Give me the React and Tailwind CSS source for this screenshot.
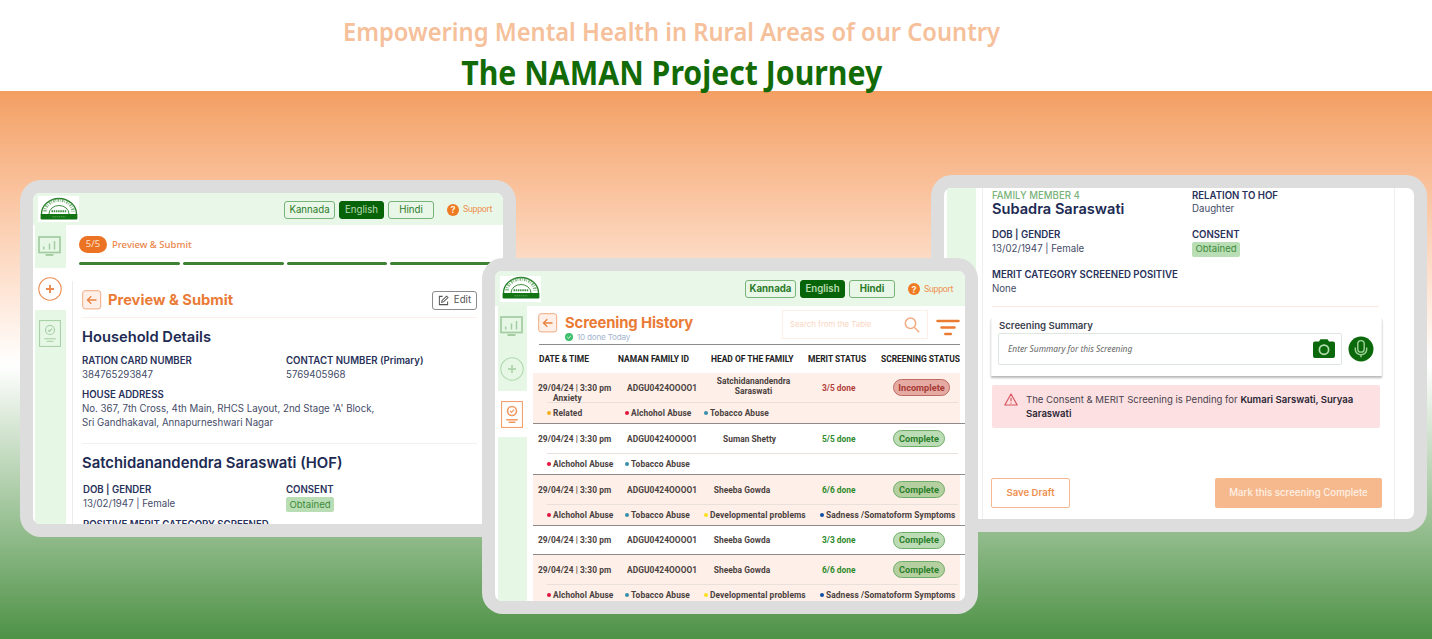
import React from "react";

const cx = (...c) => c.filter(Boolean).join(" ");

function Logo() {
  return (
    <svg viewBox="0 0 38 23" className="h-[23px] w-[38px]">
      <path d="M1.5 17a17.5 15.5 0 0 1 35 0" fill="#fff" stroke="#27802a" strokeWidth="1.3" />
      <path d="M9 17a10 8.5 0 0 1 20 0" fill="none" stroke="#3f8f40" strokeWidth="1" />
      <path d="M5 14.5a14 11.5 0 0 1 28 0" fill="none" stroke="#4d9a4e" strokeWidth="3.6" strokeDasharray="1.6 .9 .8 1.3" opacity=".7" />
      <path d="M11.5 14.3h15" stroke="#3f8f40" strokeWidth="2" strokeDasharray="1.5 .7" />
      <path d="M.6 17h36.8v4.2q0 1.2-1.2 1.2H1.8q-1.2 0-1.2-1.2z" fill="#137413" />
      <path d="M12.5 19.8h13" stroke="#5aa35a" strokeWidth="1" strokeDasharray="1.5 .6" />
    </svg>
  );
}

function Monitor() {
  return (
    <svg viewBox="0 0 23 21" className="h-[21px] w-[23px]" fill="none" stroke="#a3cca2">
      <rect x="1" y="1" width="21" height="15.5" strokeWidth="1.7" />
      <path d="M5.7 13.5v-3M11.5 13.5V7.5M16.5 13.5V5" strokeWidth="1.5" />
      <path d="M7.5 19h8" strokeWidth="1.8" />
    </svg>
  );
}

function Plus({ active }) {
  return (
    <svg viewBox="0 0 24 24" className="size-6" fill="none" stroke={active ? "#ec8b50" : "#b2d8b1"}>
      <circle cx="12" cy="12" r="11.2" strokeWidth="1.1" />
      <path d="M12 8v8M8 12h8" strokeWidth="1.9" />
    </svg>
  );
}

function Doc({ active }) {
  return (
    <svg viewBox="0 0 22 27" className="h-[27px] w-[22px]" fill="none" stroke={active ? "#f2995f" : "#a3cda2"}>
      <rect x=".6" y=".6" width="20.8" height="25.8" strokeWidth="1" />
      <circle cx="11" cy="10" r="4.5" strokeWidth={active ? 1.6 : 1.1} />
      <path d="M9 10l1.5 1.5 2.6-2.8" strokeWidth="1.2" />
      <path d="M5.2 18.8h11.6M7.5 21.3h7" strokeWidth={active ? 1.5 : 1} />
    </svg>
  );
}

function Back() {
  return (
    <svg viewBox="0 0 20 20" className="size-5 shrink-0" fill="none">
      <rect x=".7" y=".7" width="18" height="18.2" rx="2.5" fill="#fef0e8" stroke="#f0a981" strokeWidth="1" />
      <path d="M14.5 10H5.5M9.3 6.2 5.4 10l3.9 3.8" stroke="#ea8242" strokeWidth="1.3" />
    </svg>
  );
}

function Device({ className, children }) {
  return (
    <section className={cx("absolute h-[357px] w-[496px] rounded-[21px] bg-[#dcdddc] p-[13px]", className)}>
      <div className="flex h-full w-full flex-col overflow-hidden rounded-[7px] bg-white">{children}</div>
    </section>
  );
}

function Languages({ bold }) {
  const base = "flex h-[18px] items-center justify-center rounded-[3px] border text-[9.7px] leading-none";
  const weight = bold ? "font-bold" : "font-normal";
  return (
    <div className="flex items-center pt-px">
      <div className="flex gap-[4px]">
        <span className={cx(base, weight, "w-[51px] border-[#78b377] text-[#2b7b29]")}>Kannada</span>
        <span className={cx(base, bold ? "font-semibold" : "", "w-[45px] border-[#076307] bg-[#076307] text-[#b7dcb2]")}>English</span>
        <span className={cx(base, weight, "w-[46px] border-[#78b377] text-[#2b7b29]")}>Hindi</span>
      </div>
      <span className="ml-[13px] flex size-3 items-center justify-center rounded-full bg-[#ef7a24] text-[9px] leading-none font-bold text-[#fff0df]">?</span>
      <span className="ml-[4px] w-[29px] font-[Roboto] text-[8.8px] leading-none tracking-[-0.28px] text-[#ee9050]">Support</span>
    </div>
  );
}

const Label = ({ children, className }) => (
  <div className={cx("text-[9.65px] leading-[14px] font-semibold whitespace-nowrap text-[#28315a]", className)}>{children}</div>
);
const Value = ({ children, className }) => (
  <div className={cx("text-[9.7px] leading-[14px] whitespace-nowrap text-[#454c68]", className)}>{children}</div>
);
const Obtained = () => (
  <span className="flex h-[15px] w-[48px] items-center justify-center rounded-[2px] bg-[#b9ddb4] text-[9.6px] leading-none text-[#3d8b3b]">
    Obtained
  </span>
);

function PreviewDevice() {
  return (
    <Device className="top-[180px] left-[20px]">
      <header className="flex h-[32px] shrink-0 items-center justify-between bg-[#e9f7e8] pr-[11px] pl-[5px]">
        <div className="flex h-[26px] w-[41px] items-center justify-center bg-white pb-[2px]">
          <Logo />
        </div>
        <Languages />
      </header>
      <div className="flex min-h-0 flex-1">
        <nav className="ml-[2px] flex w-[31px] shrink-0 flex-col items-center bg-[#e6f8e5] pt-[11px] pr-[2px]">
          <Monitor />
          <div className="mt-[11px] -mr-[2px] flex h-[42px] w-[31px] items-center justify-center self-start bg-white pr-[2px]">
            <Plus active />
          </div>
          <div className="mt-[10px]">
            <Doc />
          </div>
        </nav>
        <main className="flex min-w-0 flex-1 flex-col pl-[6px]">
          <div className="mt-[11px] flex h-[17px] shrink-0 items-center pl-[7px]">
            <span className="flex h-[17px] w-[28px] items-center justify-center rounded-full bg-[#ec7324] font-['Noto_Sans'] text-[9.5px] text-[#fde3cf]">5/5</span>
            <span className="ml-[5px] pt-px font-['Noto_Sans'] text-[9.5px] font-medium text-[#e98549]">Preview &amp; Submit</span>
          </div>
          <div className="mt-[9px] ml-[7px] flex w-[412px] shrink-0 gap-[3px]">
            {[0, 1, 2, 3].map((i) => (
              <i key={i} className="h-[3px] flex-1 rounded-full bg-[#3d8134]" />
            ))}
          </div>
          <div className="mt-[16px] flex flex-1 flex-col border-l border-[#ececec] pr-[26px] pl-[9px]">
            <div className="flex h-[37px] shrink-0 items-center border-b border-[#fdf0ea] pt-[2px]">
              <Back />
              <h2 className="ml-[6px] pt-px text-[14.7px] font-bold text-[#ea7b36]">Preview &amp; Submit</h2>
              <span className="ml-auto flex h-[19px] w-[45px] items-center justify-center gap-[5px] rounded-[3px] border border-[#8b8b8b] text-[9.7px] text-[#555]">
                <svg viewBox="0 0 12 12" className="size-[11px]" fill="none" stroke="#555" strokeWidth="1.1">
                  <path d="M5 1.500H1.500v9h9V7" />
                  <path d="M4 8l.5-2L9.300 1.200l1.600 1.600L6 7.500z" />
                </svg>
                Edit
              </span>
            </div>
            <h3 className="mt-[9px] text-[14.7px] leading-[20px] font-semibold text-[#202a52]">Household Details</h3>
            <div className="mt-[7px] grid grid-cols-[204px_1fr]">
              <Label>RATION CARD NUMBER</Label>
              <Label>CONTACT NUMBER (Primary)</Label>
              <Value>384765293847</Value>
              <Value>5769405968</Value>
            </div>
            <Label className="mt-[6px]">HOUSE ADDRESS</Label>
            <Value>No. 367, 7th Cross, 4th Main, RHCS Layout, 2nd Stage &#39;A&#39; Block,</Value>
            <Value>Sri Gandhakaval, Annapurneshwari Nagar</Value>
            <div className="mt-[13px] h-px bg-[#f3f0ef]" />
            <h3 className="mt-[9px] text-[14.85px] leading-[20px] font-semibold whitespace-nowrap text-[#202a52]">Satchidanandendra Saraswati (HOF)</h3>
            <div className="mt-[10px] grid grid-cols-[203px_1fr] pl-[1px]">
              <Label>DOB | GENDER</Label>
              <Label>CONSENT</Label>
              <Value>13/02/1947 | Female</Value>
              <Obtained />
            </div>
            <Label className="mt-[6px] pl-[1px]">POSITIVE MERIT CATEGORY SCREENED</Label>
          </div>
        </main>
      </div>
    </Device>
  );
}

const ALC = ["#e2143c", "Alchohol Abuse"];
const TOB = ["#3a8fa8", "Tobacco Abuse"];
const DEV = ["#fbe01e", "Developmental problems"];
const SAD = ["#0e4fa6", "Sadness /Somatoform Symptoms"];
const ROWS = [
  { name: "Satchidanandendra Saraswati", pad: "pl-[1px] pr-[9px] -mt-[3px]", merit: "3/5 done", bad: true, tinted: true, note: "Anxiety", tags: [["#f2b01e", "Related"], ALC, TOB] },
  { name: "Suman Shetty", pad: "pr-[16px]", merit: "5/5 done", tags: [ALC, TOB] },
  { name: "Sheeba Gowda", pad: "pr-[31px]", merit: "6/6 done", tinted: true, tags: [ALC, TOB, DEV, SAD] },
  { name: "Sheeba Gowda", pad: "pr-[31px]", merit: "3/3 done", tags: [] },
  { name: "Sheeba Gowda", pad: "pr-[31px]", merit: "6/6 done", tinted: true, tags: [ALC, TOB, DEV, SAD] },
];

function Row({ row }) {
  const status = row.bad
    ? "w-[57px] border-[#bd6b64] bg-[#e5aaa2] text-[#a63a35]"
    : cx("w-[52px] border-[#6fae69] text-[#2b7f2b]", row.tinted ? "bg-[#b5cfa0]" : "bg-[#bcdcb5]");
  const hasTags = row.tags.length > 0;
  return (
    <div className="shrink-0 border-b border-[#8d8a89]">
      <div className={cx("mr-[5px]", row.tinted && "bg-[#fef0e9]")}>
        <div className={cx("grid grid-cols-[87px_83px_99px_76px_1fr] items-center pl-[5px]", hasTags ? "h-[29px]" : "h-[28px]")}>
          <div className="relative tracking-[0.06px] whitespace-nowrap">
            29/04/24 | 3:30 pm
            {row.note && <span className="absolute top-[10px] left-[15px]">{row.note}</span>}
          </div>
          <div className="pl-[2px] tracking-[0.06px]">ADGU0424OOOO1</div>
          <div className={cx("text-center leading-[10px] tracking-[0.04px]", row.pad)}>{row.name}</div>
          <div className={cx("pl-[15px]", row.bad ? "text-[#b3413c]" : "text-[#2f8a2d]")}>{row.merit}</div>
          <div className="pl-[10px]">
            <span className={cx("flex h-[17px] items-center justify-center rounded-full border text-[9.2px] font-bold", status)}>
              {row.bad ? "Incomplete" : "Complete"}
            </span>
          </div>
        </div>
        {hasTags && (
          <div className="mr-[2px] ml-[14px] grid h-[21px] grid-cols-[78px_79px_116px_1fr] items-center border-t border-[#e9dfdb] pb-px">
            {row.tags.map(([color, text]) => (
              <div key={text} className="flex items-center gap-[2px] tracking-[0.09px] whitespace-nowrap">
                <i className="size-[4px] shrink-0 rounded-full" style={{ backgroundColor: color }} />
                {text}
              </div>
            ))}
          </div>
        )}
      </div>
    </div>
  );
}

function HistoryDevice() {
  return (
    <Device className="top-[258px] left-[482px] !h-[356px]">
      <header className="flex h-[35px] shrink-0 items-center justify-between bg-[#e9f7e8] pr-[12px] pl-[5px]">
        <div className="flex h-[26px] w-[41px] items-center justify-center bg-white pb-[2px]">
          <Logo />
        </div>
        <Languages bold />
      </header>
      <div className="flex min-h-0 flex-1">
        <nav className="ml-[3px] flex w-[29px] shrink-0 flex-col items-center bg-[#e6f8e5] pt-[10px] pr-[2px]">
          <Monitor />
          <div className="mt-[20px]">
            <Plus />
          </div>
          <div className="mt-[10px] -mr-[2px] flex h-[46px] w-[29px] items-center justify-center self-start bg-white pr-[2px]">
            <Doc active />
          </div>
        </nav>
        <main className="flex min-w-0 flex-1 flex-col pl-[6px]">
          <div className="mr-[5px] ml-[6px] flex h-[39px] shrink-0 items-start border-b border-[#8b8b8b]">
            <div className="mt-[7px] -ml-px"><Back /></div>
            <div className="ml-[7px] pt-[8px]">
              <h2 className="text-[14.8px] leading-[18px] font-bold tracking-[-0.1px] whitespace-nowrap text-[#ea7b36]">Screening History</h2>
              <div className="flex items-center text-[8.1px] leading-[10px] tracking-[-0.2px] text-[#a4b5cd]">
                <svg viewBox="0 0 8 8" className="mr-[4px] size-[8px]">
                  <circle cx="4" cy="4" r="4" fill="#3dc06c" />
                  <path d="M2.3 4l1.2 1.200L5.800 3" fill="none" stroke="#fff" strokeWidth=".9" />
                </svg>
                10 done Today
              </div>
            </div>
            <div className="mt-[4px] ml-auto flex h-[29px] w-[146px] items-center justify-between border border-[#fdeee6] pr-[7px] pl-[7px]">
              <span className="text-[7.8px] text-[#fbd6c2]">Search from the Table</span>
              <svg viewBox="0 0 16 16" className="size-4" fill="none" stroke="#f3ac82" strokeWidth="1.5">
                <circle cx="6.5" cy="6.3" r="5.2" />
                <path d="M10.2 10.300l5 5" />
              </svg>
            </div>
            <svg viewBox="0 0 24 17" className="mt-[13px] ml-[8px] h-[17px] w-[24px]" stroke="#ea7b30" strokeWidth="2.5" strokeLinecap="round">
              <path d="M1.5 2h21M5.5 8.500h13M9.300 15h5.500" />
            </svg>
          </div>
          <div className="grid h-[28px] shrink-0 grid-cols-[79px_93px_97px_73px_1fr] items-center pl-[6px] font-[Roboto] text-[8.45px] font-bold whitespace-nowrap text-[#222]">
            <span>DATE &amp; TIME</span>
            <span>NAMAN FAMILY ID</span>
            <span>HEAD OF THE FAMILY</span>
            <span>MERIT STATUS</span>
            <span>SCREENING STATUS</span>
          </div>
          <div className="flex flex-col font-[Roboto] text-[8.4px] leading-[10px] font-bold text-[#4b4240]">
            {ROWS.map((row, i) => <Row key={i} row={row} />)}
          </div>
        </main>
      </div>
    </Device>
  );
}

function SummaryDevice() {
  return (
    <Device className="top-[174.5px] left-[931px]">
      <div className="flex min-h-0 flex-1">
        <nav className="ml-[3px] w-[29px] shrink-0 bg-[#e6f8e5]" />
        <main className="mr-[19px] ml-[6px] flex min-w-0 flex-1 flex-col border-x border-[#efefef] pr-[12px] pl-[9px]">
          <div className="mt-px grid grid-cols-[200px_1fr]">
            <Label className="!font-medium !text-[#79b378]">FAMILY MEMBER 4</Label>
            <Label>RELATION TO HOF</Label>
            <h2 className="text-[14.6px] leading-[12px] font-semibold text-[#202a52]">Subadra Saraswati</h2>
            <Value className="!leading-[12px]">Daughter</Value>
          </div>
          <div className="mt-[13px] grid grid-cols-[200px_1fr]">
            <Label>DOB | GENDER</Label>
            <Label>CONSENT</Label>
            <Value>13/02/1947 | Female</Value>
            <Obtained />
          </div>
          <Label className="mt-[11px]">MERIT CATEGORY SCREENED POSITIVE</Label>
          <Value>None</Value>
          <div className="mt-[10px] mr-[3px] h-px shrink-0 bg-[#fce8de]" />
          <div className="mt-[11px] -ml-[1px] flex h-[58px] shrink-0 flex-col border-x border-[#f3f3f3] pr-[7px] pl-[6px] shadow-[0_2px_2px_rgba(0,0,0,0.28)]">
            <div className="pl-px text-[9.6px] leading-[15px] font-semibold text-[#3b3f4e]">Screening Summary</div>
            <div className="flex items-center">
              <div className="flex h-[32px] w-[344px] shrink-0 items-center justify-between rounded-[2px] border border-[#dfe6df] pr-[6px] pl-[9px]">
                <span className="pt-px font-['Noto_Sans'] text-[8.4px] text-[#666] italic">Enter Summary for this Screening</span>
                <svg viewBox="0 0 22 19" className="h-[19px] w-[22px]">
                  <path d="M2 2.500h4L7.500.3h7L16 2.500h4q2 0 2 2V17q0 2-2 2H2q-2 0-2-2V4.500q0-2 2-2z" fill="#0b690b" />
                  <circle cx="11" cy="10.7" r="4.6" fill="none" stroke="#b5dfb0" strokeWidth="1.7" />
                </svg>
              </div>
              <svg viewBox="0 0 26 26" className="ml-[6px] size-[26px] shrink-0" fill="none" stroke="#9fd39a" strokeWidth="1.4">
                <circle cx="13" cy="13" r="12.5" fill="#0b690b" stroke="none" />
                <rect x="9.8" y="4.6" width="6.4" height="11.5" rx="3.2" />
                <path d="M7.3 11.500v2a5.700 5.200 0 0 0 11.400 0v-2M13 18.700v2.500" />
              </svg>
            </div>
          </div>
          <div className="mt-[9px] mr-[2px] flex h-[43px] shrink-0 rounded-[2px] bg-[#fde0e1] pt-[7px] pl-[12px]">
            <svg viewBox="0 0 14 13" className="mt-[1px] mr-[8px] h-[13px] w-[14px] shrink-0" fill="none" stroke="#d95560" strokeWidth="1.2" strokeLinejoin="round">
              <path d="M7 1 13.200 12H.8zM7 4.800v3.400M7 9.400v1.200" />
            </svg>
            <p className="pt-px text-[9.55px] leading-[14.5px] text-[#484350]">
              The Consent &amp; MERIT Screening is Pending for <b className="font-semibold text-[#2b2736]">Kumari Sarswati, Suryaa<br />Saraswati</b>
            </p>
          </div>
          <div className="mt-[50px] -ml-[1px] flex shrink-0 justify-between">
            <span className="flex h-[30px] w-[79px] items-center justify-center rounded-[2px] border border-[#f4b78f] pt-px text-[9.6px] font-semibold text-[#ef8f4f]">Save Draft</span>
            <span className="flex h-[30px] w-[167px] items-center justify-center rounded-[2px] bg-[#f6b98e] pt-px text-[9.7px] font-medium text-[#fff0e4]">Mark this screening Complete</span>
          </div>
        </main>
      </div>
    </Device>
  );
}

export default function App() {
  return (
    <div className="relative flex h-[639px] w-[1432px] flex-col overflow-hidden bg-white font-[Inter,sans-serif]">
      <div className="relative z-10 flex h-[91px] shrink-0 flex-col items-center pr-[89px] font-['Noto_Sans',sans-serif] whitespace-nowrap">
        <p className="mt-[13px] scale-x-[0.948] text-[25px] leading-[36px] font-semibold text-[#f5c09a]">Empowering Mental Health in Rural Areas of our Country</p>
        <h1 className="scale-x-[0.889] text-[34px] leading-[47px] font-bold text-[#136b07]">The NAMAN Project Journey</h1>
      </div>
      <div className="flex-1 bg-linear-to-b from-[#f39f62] via-white to-[#4d9245]" />
      <PreviewDevice />
      <SummaryDevice />
      <HistoryDevice />
    </div>
  );
}
